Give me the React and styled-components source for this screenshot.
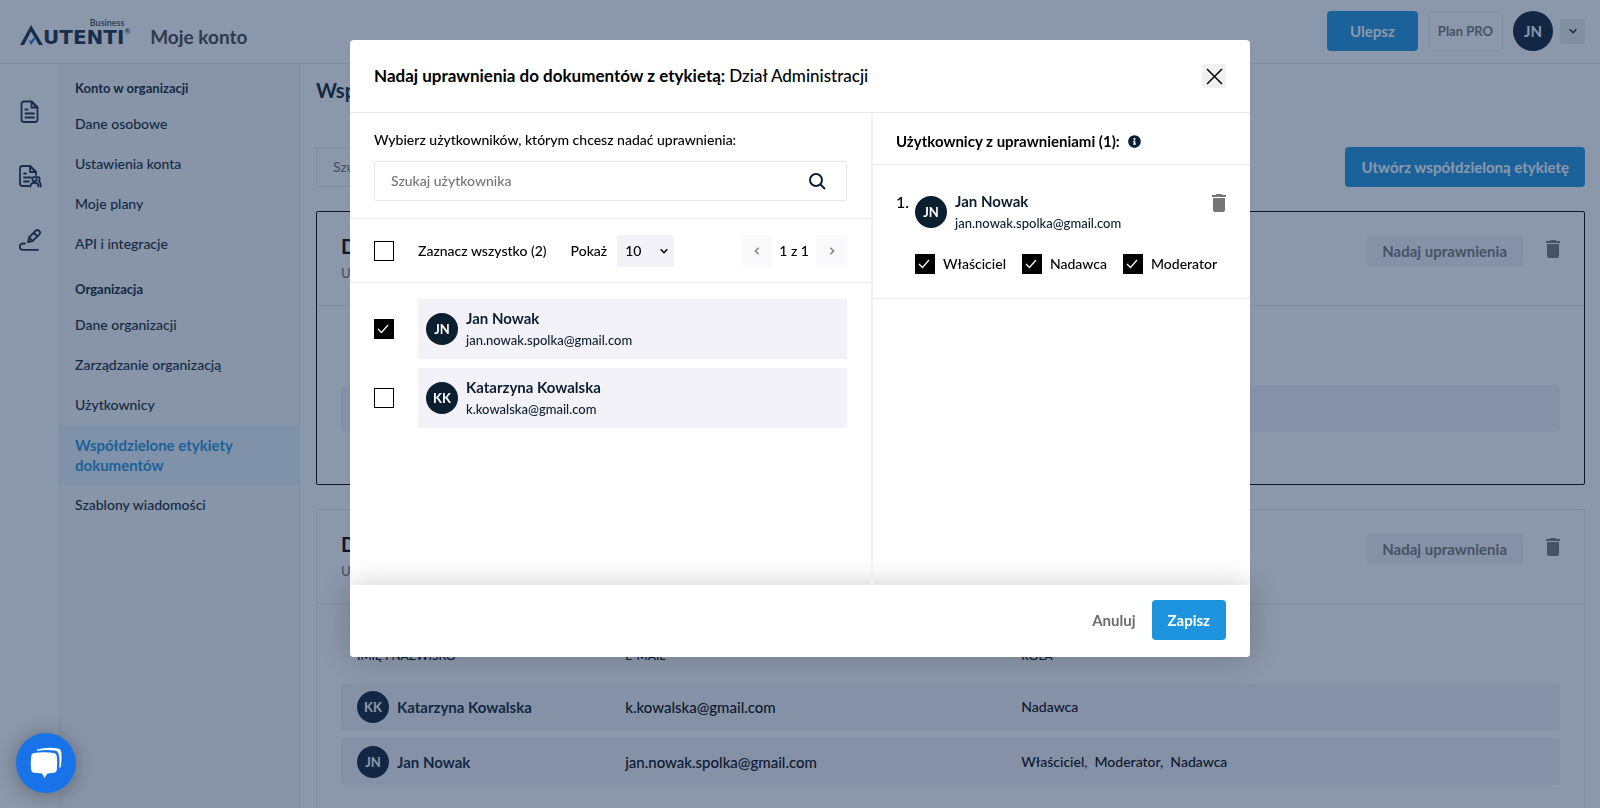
import React, { useState } from 'react';
import styled, { createGlobalStyle } from 'styled-components';
import { FaInfoCircle } from 'react-icons/fa';

const navGroups = [
  {
    title: 'Konto w organizacji',
    items: ['Dane osobowe', 'Ustawienia konta', 'Moje plany', 'API i integracje'],
  },
  {
    title: 'Organizacja',
    items: [
      'Dane organizacji',
      'Zarządzanie organizacją',
      'Użytkownicy',
      'Współdzielone etykiety dokumentów',
      'Szablony wiadomości',
    ],
  },
];

const users = [
  { id: 1, initials: 'JN', name: 'Jan Nowak', email: 'jan.nowak.spolka@gmail.com' },
  { id: 2, initials: 'KK', name: 'Katarzyna Kowalska', email: 'k.kowalska@gmail.com' },
];

const labels = [
  {
    name: 'Dział Administracji',
    active: true,
    members: [{ ...users[0], roles: 'Właściciel' }],
  },
  {
    name: 'Dział Sprzedaży',
    members: [
      { ...users[1], roles: 'Nadawca' },
      { ...users[0], roles: 'Właściciel,  Moderator,  Nadawca' },
    ],
  },
];

const roles = ['Właściciel', 'Nadawca', 'Moderator'];

function TrashIcon() {
  return (
    <svg width="14" height="18" viewBox="5 3 14 18" fill="currentColor" aria-hidden="true">
      <path d="M6 19c0 1.1.9 2 2 2h8c1.1 0 2-.9 2-2V7H6v12zM19 4h-3.5l-1-1h-5l-1 1H5v2h14V4z" />
    </svg>
  );
}

function Chevron({ direction = 'down' }) {
  const paths = { down: 'M2 4l4 4 4-4', left: 'M8 2L4 6l4 4', right: 'M4 2l4 4-4 4' };
  return (
    <svg width="10" height="10" viewBox="0 0 12 12" fill="none" stroke="currentColor" strokeWidth="1.8" aria-hidden="true">
      <path d={paths[direction]} />
    </svg>
  );
}

function CheckBox({ checked, onChange, label }) {
  return (
    <BoxWrapper>
      <BoxInput type="checkbox" checked={checked} onChange={onChange} aria-label={label} />
      {checked && (
        <BoxMark viewBox="0 0 20 20" fill="none" stroke="#fff" strokeWidth="1.2" aria-hidden="true">
          <path d="M4 10l3.5 3.5L14 6" />
        </BoxMark>
      )}
    </BoxWrapper>
  );
}

function Logo() {
  return (
    <LogoLink href="#" aria-label="Autenti Business">
      <svg width="23" height="20" viewBox="0 0 23 20" aria-hidden="true">
        <path d="M0 20L11 0l12 20h-4L11 6.500 4 20z" fill="#1b2c44" />
        <path d="M8 14l2.500 2.500L15 11l-.5 4-3.500 5z" fill="#146be0" />
      </svg>
      <LogoText>
        <LogoSub>Business</LogoSub>
        <LogoName>UTENTI</LogoName>
      </LogoText>
      <LogoMark>®</LogoMark>
    </LogoLink>
  );
}

function Header() {
  return (
    <HeaderWrapper>
      <Logo />
      <HeaderTitle>Moje konto</HeaderTitle>
      <HeaderActions>
        <PrimaryButton $wide>Ulepsz</PrimaryButton>
        <PlanBadge>Plan PRO</PlanBadge>
        <Account>
          <Avatar $large>JN</Avatar>
          <MenuButton aria-label="Menu użytkownika">
            <Chevron />
          </MenuButton>
        </Account>
      </HeaderActions>
    </HeaderWrapper>
  );
}

function Rail() {
  return (
    <RailWrapper>
      <RailLink href="#" aria-label="Dokumenty">
        <svg viewBox="0 0 24 24">
          <path d="M13.500 1.500H6A2.500 2.500 0 0 0 3.500 4v15.500A2.500 2.500 0 0 0 6 22h11a2.500 2.500 0 0 0 2.500-2.500v-12z" />
          <path d="M13.500 1.500v6h6zM7.500 9.500h2M7.500 13.500h8.500M7.500 17.500h8.500" />
        </svg>
      </RailLink>
      <RailLink href="#" aria-label="Dokumenty współdzielone">
        <svg viewBox="0 0 24 24">
          <path d="M11 22H4.500A2.500 2.500 0 0 1 2 19.500v-15A2.500 2.500 0 0 1 4.500 2H12l6 6v3" />
          <path d="M12 2v6h6zM6 9.500h2M6 13.500h7M6 17.500h5" />
          <circle cx="16.500" cy="15" r="2.200" />
          <path d="M12.500 22.500c0-5 8-5 8 0M19.500 12.800a2.200 2.200 0 0 1 1 4.200c1.500.8 2.300 2.500 2.300 5.500" />
        </svg>
      </RailLink>
      <RailLink href="#" aria-label="Podpis">
        <svg viewBox="0 0 24 24">
          <path d="M10 14l1-4.500 6.500-6.500a2.600 2.600 0 0 1 3.700 3.700L14.500 13z" />
          <path d="M16 5l3.500 3.500M11 9.500l3.500 3.500M7 15.500H5a3.200 3.200 0 0 0 0 6.400h15" />
        </svg>
      </RailLink>
    </RailWrapper>
  );
}

function Sidebar() {
  return (
    <SidebarWrapper>
      {navGroups.map((group) => (
        <div key={group.title}>
          <NavHeading>{group.title}</NavHeading>
          {group.items.map((item) => (
            <NavLink href="#" key={item} $active={item.startsWith('Współdzielone')}>
              {item}
            </NavLink>
          ))}
        </div>
      ))}
    </SidebarWrapper>
  );
}

function LabelCard({ label }) {
  return (
    <Card $active={label.active}>
      <CardHeader>
        <div>
          <CardTitle>{label.name}</CardTitle>
          <CardInfo>Użytkownicy: {label.members.length}</CardInfo>
        </div>
        <CardActions>
          <SoftButton>Nadaj uprawnienia</SoftButton>
          <IconButton aria-label="Usuń etykietę">
            <TrashIcon />
          </IconButton>
        </CardActions>
      </CardHeader>
      <CardBody>
        <MembersTable>
          <thead>
            <tr>
              <th>Imię i nazwisko</th>
              <th>E-mail</th>
              <th>Rola</th>
            </tr>
          </thead>
          <tbody>
            {label.members.map((m) => (
              <tr key={m.id}>
                <td>
                  <Member>
                    <Avatar>{m.initials}</Avatar>
                    <strong>{m.name}</strong>
                  </Member>
                </td>
                <td>{m.email}</td>
                <td>{m.roles}</td>
              </tr>
            ))}
          </tbody>
        </MembersTable>
      </CardBody>
    </Card>
  );
}

function UserInfo({ user }) {
  return (
    <UserInfoWrapper>
      <Avatar>{user.initials}</Avatar>
      <UserText>
        <strong>{user.name}</strong>
        <span>{user.email}</span>
      </UserText>
    </UserInfoWrapper>
  );
}

function PermissionsModal() {
  const [selected, setSelected] = useState([1]);
  const [granted, setGranted] = useState(roles);

  const toggle = (list, setList, value) => {
    setList(list.includes(value) ? list.filter((v) => v !== value) : [...list, value]);
  };

  const toggleAll = () => {
    setSelected(selected.length === users.length ? [] : users.map((u) => u.id));
  };

  const selectedUsers = users.filter((u) => selected.includes(u.id));

  return (
    <ModalOverlay>
      <ModalContent role="dialog" aria-modal="true" aria-labelledby="modal-title">
        <ModalHeader>
          <ModalTitle id="modal-title">
            Nadaj uprawnienia do dokumentów z etykietą: <span>Dział Administracji</span>
          </ModalTitle>
          <CloseButton aria-label="Zamknij">
            <svg width="17" height="17" viewBox="0 0 17 17" stroke="#000" strokeWidth="1.5" aria-hidden="true">
              <path d="M1 1l15 15M16 1L1 16" />
            </svg>
          </CloseButton>
        </ModalHeader>

        <ModalBody>
          <UsersColumn>
            <SearchSection>
              <label htmlFor="user-search">Wybierz użytkowników, którym chcesz nadać uprawnienia:</label>
              <SearchField>
                <input id="user-search" type="text" placeholder="Szukaj użytkownika" />
                <button aria-label="Szukaj">
                  <svg width="18" height="18" viewBox="0 0 18 18" fill="none" stroke="#0b1f30" strokeWidth="2" aria-hidden="true">
                    <circle cx="8" cy="8" r="6" />
                    <path d="M12 12l5 5" />
                  </svg>
                </button>
              </SearchField>
            </SearchSection>

            <Toolbar>
              <CheckLabel $spaced>
                <CheckBox checked={selected.length === users.length} onChange={toggleAll} />
                Zaznacz wszystko ({users.length})
              </CheckLabel>
              <PageSize>
                Pokaż
                <SelectWrapper>
                  <select defaultValue="10">
                    <option>10</option>
                    <option>20</option>
                    <option>50</option>
                  </select>
                  <Chevron />
                </SelectWrapper>
              </PageSize>
              <Pager>
                <PagerButton aria-label="Poprzednia strona" disabled>
                  <Chevron direction="left" />
                </PagerButton>
                1 z 1
                <PagerButton aria-label="Następna strona" disabled>
                  <Chevron direction="right" />
                </PagerButton>
              </Pager>
            </Toolbar>

            <UserList>
              {users.map((user) => (
                <UserRow key={user.id}>
                  <CheckBox
                    checked={selected.includes(user.id)}
                    onChange={() => toggle(selected, setSelected, user.id)}
                    label={user.name}
                  />
                  <UserTile>
                    <UserInfo user={user} />
                  </UserTile>
                </UserRow>
              ))}
            </UserList>
          </UsersColumn>

          <GrantedColumn>
            <GrantedHeading>
              Użytkownicy z uprawnieniami ({selectedUsers.length}):
              <FaInfoCircle size={13} color="#0b1f30" />
            </GrantedHeading>
            {selectedUsers.map((user, index) => (
              <GrantedItem key={user.id}>
                <GrantedIndex>{index + 1}.</GrantedIndex>
                <GrantedDetails>
                  <GrantedTop>
                    <UserInfo user={user} />
                    <IconButton aria-label="Usuń użytkownika">
                      <TrashIcon />
                    </IconButton>
                  </GrantedTop>
                  <RoleList>
                    {roles.map((role) => (
                      <CheckLabel key={role}>
                        <CheckBox
                          checked={granted.includes(role)}
                          onChange={() => toggle(granted, setGranted, role)}
                        />
                        {role}
                      </CheckLabel>
                    ))}
                  </RoleList>
                </GrantedDetails>
              </GrantedItem>
            ))}
          </GrantedColumn>
        </ModalBody>

        <ModalFooter>
          <TextButton>Anuluj</TextButton>
          <PrimaryButton>Zapisz</PrimaryButton>
        </ModalFooter>
      </ModalContent>
    </ModalOverlay>
  );
}

function App() {
  return (
    <>
      <GlobalStyle />
      <Page>
        <Header />
        <Content>
          <Rail />
          <Sidebar />
          <Main>
            <PageTitle>Współdzielone etykiety dokumentów</PageTitle>
            <MainToolbar>
              <LabelSearch type="text" placeholder="Szukaj etykiety" aria-label="Szukaj etykiety" />
              <PrimaryButton>Utwórz współdzieloną etykietę</PrimaryButton>
            </MainToolbar>
            {labels.map((label) => (
              <LabelCard key={label.name} label={label} />
            ))}
          </Main>
        </Content>
      </Page>
      <PermissionsModal />
      <ChatButton aria-label="Czat">
        <svg width="32" height="32" viewBox="0 0 32 32" fill="#fff" aria-hidden="true">
          <path d="M7 2.500Q19-.5 28 1.500q3 .5 3.300 3.500.7 7-.5 15l-1.500 1.500Q30 12 28.500 6.500 28 4 25 3.500 16 2.500 7 3.800z" />
          <path d="M4 6q11-1.500 20 0 2.500.5 2.800 3 .8 7 0 14-.3 2.500-2.800 2.800l-6.500.7-3 4.500-2.500-4.500-8-.7Q1.500 25.500 1.200 23 .3 16 1.200 9 1.500 6.500 4 6z" />
        </svg>
      </ChatButton>
    </>
  );
}

const GlobalStyle = createGlobalStyle`
  * {
    box-sizing: border-box;
  }

  body {
    margin: 0;
    font-family: Lato, sans-serif;
    font-size: 14px;
    font-weight: 500;
    line-height: 20px;
    color: #000;
  }

  button, input, select {
    font: inherit;
    color: inherit;
  }

  button {
    border: none;
    padding: 0;
    background: none;
    cursor: pointer;
  }

  a {
    text-decoration: none;
  }

  h1, h2, h3, p {
    margin: 0;
  }

  strong {
    font-size: 15px;
    font-weight: 700;
    color: #0b1f30;
  }
`;

const Page = styled.div`
  display: flex;
  flex-direction: column;
  height: 100vh;
  overflow: hidden;
`;

const HeaderWrapper = styled.header`
  display: flex;
  flex-shrink: 0;
  align-items: center;
  height: 64px;
  padding: 0 15px 1px 20px;
  border-bottom: 1px solid #e8e8e8;
`;

const LogoLink = styled.a`
  display: flex;
  align-items: flex-end;
  height: 28px;
  color: #1b2c44;
`;

const LogoText = styled.span`
  display: flex;
  flex-direction: column;
`;

const LogoSub = styled.span`
  align-self: flex-end;
  font-size: 9px;
  line-height: 12px;
`;

const LogoName = styled.span`
  font-family: "DejaVu Sans", sans-serif;
  font-size: 20px;
  font-weight: 700;
  line-height: 16px;
`;

const LogoMark = styled.span`
  align-self: center;
  font-size: 7px;
  line-height: 8px;
`;

const HeaderTitle = styled.h1`
  margin-left: 20px;
  padding-top: 12px;
  font-size: 19px;
  line-height: 24px;
  color: #444;
`;

const HeaderActions = styled.div`
  display: flex;
  align-items: center;
  gap: 10px;
  margin-left: auto;
`;

const Account = styled.div`
  display: flex;
  align-items: center;
  gap: 7px;
`;

const PrimaryButton = styled.button`
  height: 40px;
  padding: 0 ${({ $wide }) => ($wide ? 23 : 16)}px;
  border-radius: 4px;
  background: #1e93de;
  color: #fff;
  font-size: 15px;
  font-weight: 700;
`;

const PlanBadge = styled.span`
  padding: 9px;
  border: 1px solid #f0f0f0;
  border-radius: 4px;
  font-size: 13px;
  font-weight: 700;
  color: #757575;
`;

const Avatar = styled.span`
  display: flex;
  flex-shrink: 0;
  align-items: center;
  justify-content: center;
  width: ${({ $large }) => ($large ? 40 : 32)}px;
  height: ${({ $large }) => ($large ? 40 : 32)}px;
  border-radius: 50%;
  background: #0b1f30;
  color: #fff;
  font-size: ${({ $large }) => ($large ? 15 : 13)}px;
  font-weight: 700;
`;

const MenuButton = styled.button`
  width: 25px;
  height: 25px;
  border-radius: 2px;
  background: #ededed;
  color: #0b1f30;
`;

const Content = styled.div`
  display: flex;
  flex: 1;
  min-height: 0;
`;

const RailWrapper = styled.nav`
  display: flex;
  flex-direction: column;
  gap: 40px;
  width: 60px;
  padding: 36px 18px;
  border-right: 1px solid #e8e8e8;
`;

const RailLink = styled.a`
  height: 24px;

  svg {
    width: 24px;
    height: 24px;
    fill: none;
    stroke: #1b2c44;
    stroke-width: 1.8;
    stroke-linejoin: round;
    stroke-linecap: round;
  }
`;

const SidebarWrapper = styled.nav`
  display: flex;
  flex-direction: column;
  gap: 1px;
  width: 240px;
  border-right: 1px solid #e8e8e8;
  background: #f8f9fa;
`;

const NavHeading = styled.h3`
  padding: 16px 15px 8px;
  font-size: 13px;
  line-height: 16px;
  color: #0b1f30;
`;

const NavLink = styled.a`
  display: block;
  padding: 10px 15px;
  font-size: ${({ $active }) => ($active ? 15 : 14)}px;
  font-weight: ${({ $active }) => ($active ? 700 : 500)};
  background: ${({ $active }) => ($active ? '#e9f4fc' : 'transparent')};
  color: ${({ $active }) => ($active ? '#1e93de' : '#0b1f30')};
`;

const Main = styled.main`
  flex: 1;
  padding: 12px 15px 0 16px;
`;

const PageTitle = styled.h2`
  font-size: 20px;
  line-height: 28px;
  color: #0b1f30;
`;

const MainToolbar = styled.div`
  display: flex;
  justify-content: space-between;
  margin: 43px 0 24px;
`;

const LabelSearch = styled.input`
  width: 400px;
  padding: 0 16px;
  border: 1px solid #e8e8e8;
  border-radius: 2px;

  &::placeholder {
    color: #757575;
  }
`;

const Card = styled.section`
  margin-bottom: 24px;
  border: 1px solid ${({ $active }) => ($active ? '#000' : '#e8e8e8')};
  border-radius: 2px;
`;

const CardHeader = styled.div`
  display: flex;
  justify-content: space-between;
  padding: 20px 24px 23px;
  border-bottom: 1px solid #e8e8e8;
`;

const CardTitle = styled.h3`
  font-size: 20px;
  line-height: 28px;
`;

const CardInfo = styled.p`
  margin-top: 4px;
  font-size: 13px;
  line-height: 18px;
  color: #757575;
`;

const CardActions = styled.div`
  display: flex;
  align-items: flex-start;
  gap: 23px;
  padding-top: 4px;
`;

const SoftButton = styled.button`
  height: 30px;
  padding: 0 16px;
  border-radius: 4px;
  background: #f3f2f8;
  color: #757575;
  font-size: 15px;
  font-weight: 700;
`;

const IconButton = styled.button`
  display: flex;
  align-items: center;
  height: 26px;
  color: #757575;
`;

const CardBody = styled.div`
  padding: 24px 24px 44px;
`;

const MembersTable = styled.table`
  width: 100%;
  table-layout: fixed;
  border-spacing: 0 8px;

  th {
    height: 39px;
    padding: 0 16px;
    font-size: 12px;
    font-weight: 500;
    text-align: left;
    text-transform: uppercase;
  }

  th:nth-child(1) {
    width: 22%;
  }

  th:nth-child(2) {
    width: 32.5%;
  }

  td {
    height: 47px;
    padding: 0 16px;
    background: #f3f2f8;
    font-size: 15px;
    white-space: pre;
  }

  td:first-child {
    border-radius: 4px 0 0 4px;
  }

  td:last-child {
    border-radius: 0 4px 4px 0;
    font-size: 14px;
  }
`;

const Member = styled.div`
  display: flex;
  align-items: center;
  gap: 8px;
`;

const ModalOverlay = styled.div`
  position: fixed;
  inset: 0;
  display: flex;
  justify-content: center;
  align-items: flex-start;
  padding: 40px 16px;
  background-color: rgba(23, 47, 85, 0.5);
  z-index: 10;
`;

const ModalContent = styled.div`
  width: 100%;
  max-width: 900px;
  border-radius: 4px;
  background: #fff;
`;

const ModalHeader = styled.div`
  display: flex;
  align-items: center;
  justify-content: space-between;
  padding: 24px;
  border-bottom: 1px solid #e8e8e8;
`;

const ModalTitle = styled.h2`
  font-size: 17px;
  line-height: 24px;

  span {
    font-weight: 500;
  }
`;

const CloseButton = styled.button`
  display: flex;
  align-items: center;
  justify-content: center;
  width: 24px;
  height: 24px;
  border-radius: 3px;
  background: #f1f1f1;
`;

const ModalBody = styled.div`
  display: flex;
  min-height: 472px;
`;

const UsersColumn = styled.div`
  flex: 1;
`;

const SearchSection = styled.div`
  padding: 17px 24px;
  border-bottom: 1px solid #e8e8e8;
`;

const SearchField = styled.div`
  display: flex;
  align-items: center;
  height: 40px;
  margin-top: 11px;
  padding: 0 20px 0 16px;
  border: 1px solid #e8e8e8;
  border-radius: 2px;

  input {
    flex: 1;
    padding: 0;
    border: none;
    outline: none;
  }

  input::placeholder {
    color: #757575;
  }

  button {
    display: flex;
  }
`;

const Toolbar = styled.div`
  display: flex;
  align-items: center;
  padding: 16px 24px 15px;
  border-bottom: 1px solid #e8e8e8;
`;

const CheckLabel = styled.label`
  display: flex;
  align-items: center;
  gap: ${({ $spaced }) => ($spaced ? 24 : 8)}px;
`;

const BoxWrapper = styled.span`
  position: relative;
  display: flex;
`;

const BoxInput = styled.input`
  appearance: none;
  width: 20px;
  height: 20px;
  margin: 0;
  border: 1px solid #000;
  background: #fff;

  &:checked {
    background: #000;
  }
`;

const BoxMark = styled.svg`
  position: absolute;
  inset: 0;
  pointer-events: none;
`;

const PageSize = styled.label`
  display: flex;
  align-items: center;
  gap: 10px;
  margin-left: 24px;
`;

const SelectWrapper = styled.span`
  position: relative;

  select {
    appearance: none;
    width: 57px;
    height: 32px;
    padding: 0 8px;
    border: none;
    border-radius: 2px;
    background: #f3f2f8;
  }

  svg {
    position: absolute;
    top: 11px;
    right: 5px;
    pointer-events: none;
  }
`;

const Pager = styled.div`
  display: flex;
  align-items: center;
  gap: 7px;
  margin-left: auto;
`;

const PagerButton = styled.button`
  width: 31px;
  height: 32px;
  border-radius: 2px;
  background: #fafafc;
  color: #808080;
`;

const UserList = styled.div`
  display: flex;
  flex-direction: column;
  gap: 9px;
  padding: 16px 24px;
`;

const UserRow = styled.div`
  display: flex;
  align-items: center;
  gap: 24px;
`;

const UserTile = styled.div`
  flex: 1;
  padding: 8px;
  background: #f3f2f8;
`;

const UserInfoWrapper = styled.div`
  display: flex;
  align-items: center;
  gap: 8px;
  color: #0b1f30;
`;

const UserText = styled.div`
  display: flex;
  flex-direction: column;

  strong, span {
    line-height: 22px;
  }

  span {
    font-size: 13px;
  }
`;

const GrantedColumn = styled.div`
  width: 379px;
  border-left: 2px solid #f1f1f1;
`;

const GrantedHeading = styled.h3`
  display: flex;
  align-items: center;
  gap: 8px;
  padding: 18px 23px 13px;
  border-bottom: 1px solid #e8e8e8;
  font-size: 15px;
`;

const GrantedItem = styled.div`
  display: flex;
  gap: 6px;
  padding: 25px 24px 24px 23px;
  border-bottom: 1px solid #e8e8e8;
`;

const GrantedIndex = styled.span`
  font-size: 16px;
  line-height: 24px;
`;

const GrantedDetails = styled.div`
  flex: 1;
`;

const GrantedTop = styled.div`
  display: flex;
  align-items: flex-start;
  justify-content: space-between;
`;

const RoleList = styled.div`
  display: flex;
  gap: 16px;
  margin-top: 20px;
`;

const ModalFooter = styled.div`
  display: flex;
  align-items: center;
  justify-content: flex-end;
  gap: 16px;
  padding: 15px 24px 17px;
  border-radius: 0 0 4px 4px;
  background: #fff;
  box-shadow: 0 0 30px rgba(0, 0, 0, 0.2);
`;

const TextButton = styled.button`
  font-size: 15px;
  font-weight: 700;
  color: #6b6b6b;
`;

const ChatButton = styled.button`
  position: fixed;
  left: 16px;
  bottom: 15px;
  display: flex;
  align-items: center;
  justify-content: center;
  width: 60px;
  height: 60px;
  border-radius: 50%;
  background: #1973e8;
  box-shadow: 0 2px 20px rgba(0, 0, 0, 0.3);
  z-index: 20;
`;

export default App;
